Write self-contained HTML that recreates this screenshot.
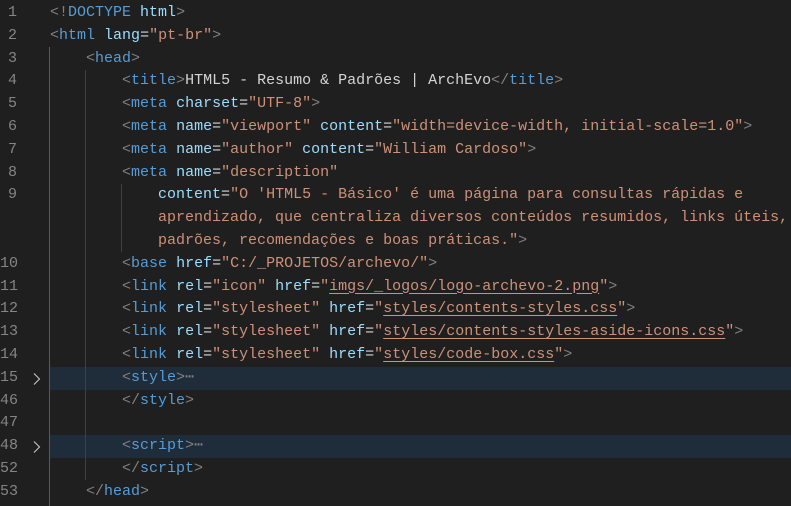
<!DOCTYPE html>
<html><head><meta charset="utf-8"><style>
html,body{margin:0;padding:0;background:#1f1f1f;width:791px;height:506px;overflow:hidden}
body{position:relative;font-family:"Liberation Mono",monospace;font-size:15px;color:#d4d4d4}
.r{position:absolute;left:0;width:791px;height:22.8px;line-height:22.8px;white-space:pre}
.n{position:absolute;left:0;width:17px;text-align:right;color:#858585}
.c{position:absolute;left:50px}
.hl{background:#1f2c3a}
.p{color:#808080}.t{color:#569cd6}.a{color:#9cdcfe}.s{color:#ce9178}.x{color:#d4d4d4}
.u{text-decoration:underline;text-underline-offset:3px}
.g{position:absolute;width:1px;background:#404040}
.f{position:absolute;left:32px;top:5px}
</style></head><body>
<div class="r" style="top:2px"><span class="n">1</span><span class="c"><span class="p">&lt;!</span><span class="t">DOCTYPE</span> <span class="a">html</span><span class="p">&gt;</span></span></div>
<div class="r" style="top:24.8px"><span class="n">2</span><span class="c"><span class="p">&lt;</span><span class="t">html</span> <span class="a">lang</span><span class="x">=</span><span class="s">"pt-br"</span><span class="p">&gt;</span></span></div>
<div class="r" style="top:47.6px"><span class="n">3</span><span class="c">    <span class="p">&lt;</span><span class="t">head</span><span class="p">&gt;</span></span></div>
<div class="r" style="top:70.4px"><span class="n">4</span><span class="c">        <span class="p">&lt;</span><span class="t">title</span><span class="p">&gt;</span>HTML5 - Resumo &amp; Padrões | ArchEvo<span class="p">&lt;/</span><span class="t">title</span><span class="p">&gt;</span></span></div>
<div class="r" style="top:93.2px"><span class="n">5</span><span class="c">        <span class="p">&lt;</span><span class="t">meta</span> <span class="a">charset</span><span class="x">=</span><span class="s">"UTF-8"</span><span class="p">&gt;</span></span></div>
<div class="r" style="top:116px"><span class="n">6</span><span class="c">        <span class="p">&lt;</span><span class="t">meta</span> <span class="a">name</span><span class="x">=</span><span class="s">"viewport"</span> <span class="a">content</span><span class="x">=</span><span class="s">"width=device-width, initial-scale=1.0"</span><span class="p">&gt;</span></span></div>
<div class="r" style="top:138.8px"><span class="n">7</span><span class="c">        <span class="p">&lt;</span><span class="t">meta</span> <span class="a">name</span><span class="x">=</span><span class="s">"author"</span> <span class="a">content</span><span class="x">=</span><span class="s">"William Cardoso"</span><span class="p">&gt;</span></span></div>
<div class="r" style="top:161.6px"><span class="n">8</span><span class="c">        <span class="p">&lt;</span><span class="t">meta</span> <span class="a">name</span><span class="x">=</span><span class="s">"description"</span></span></div>
<div class="r" style="top:184.4px"><span class="n">9</span><span class="c">            <span class="a">content</span><span class="x">=</span><span class="s">"O 'HTML5 - Básico' é uma página para consultas rápidas e</span></span></div>
<div class="r" style="top:207.2px"><span class="c">            <span class="s">aprendizado, que centraliza diversos conteúdos resumidos, links úteis,</span></span></div>
<div class="r" style="top:230px"><span class="c">            <span class="s">padrões, recomendações e boas práticas."</span><span class="p">&gt;</span></span></div>
<div class="r" style="top:252.8px"><span class="n">10</span><span class="c">        <span class="p">&lt;</span><span class="t">base</span> <span class="a">href</span><span class="x">=</span><span class="s">"C:/_PROJETOS/archevo/"</span><span class="p">&gt;</span></span></div>
<div class="r" style="top:275.6px"><span class="n">11</span><span class="c">        <span class="p">&lt;</span><span class="t">link</span> <span class="a">rel</span><span class="x">=</span><span class="s">"icon"</span> <span class="a">href</span><span class="x">=</span><span class="s">"<span class="u">imgs/_logos/logo-archevo-2.png</span>"</span><span class="p">&gt;</span></span></div>
<div class="r" style="top:298.4px"><span class="n">12</span><span class="c">        <span class="p">&lt;</span><span class="t">link</span> <span class="a">rel</span><span class="x">=</span><span class="s">"stylesheet"</span> <span class="a">href</span><span class="x">=</span><span class="s">"<span class="u">styles/contents-styles.css</span>"</span><span class="p">&gt;</span></span></div>
<div class="r" style="top:321.2px"><span class="n">13</span><span class="c">        <span class="p">&lt;</span><span class="t">link</span> <span class="a">rel</span><span class="x">=</span><span class="s">"stylesheet"</span> <span class="a">href</span><span class="x">=</span><span class="s">"<span class="u">styles/contents-styles-aside-icons.css</span>"</span><span class="p">&gt;</span></span></div>
<div class="r" style="top:344px"><span class="n">14</span><span class="c">        <span class="p">&lt;</span><span class="t">link</span> <span class="a">rel</span><span class="x">=</span><span class="s">"stylesheet"</span> <span class="a">href</span><span class="x">=</span><span class="s">"<span class="u">styles/code-box.css</span>"</span><span class="p">&gt;</span></span></div>
<div class="r" style="top:366.8px"><div class="hl" style="position:absolute;left:50px;right:0;top:0;bottom:0"></div><span class="n">15</span><svg class="f" width="10" height="14"><path d="M2 1.5 L7.5 7 L2 12.5" fill="none" stroke="#c5c5c5" stroke-width="1.1"/></svg><span class="c">        <span class="p">&lt;</span><span class="t">style</span><span class="p">&gt;⋯</span></span></div>
<div class="r" style="top:389.6px"><span class="n">46</span><span class="c">        <span class="p">&lt;/</span><span class="t">style</span><span class="p">&gt;</span></span></div>
<div class="r" style="top:412.4px"><span class="n">47</span></div>
<div class="r" style="top:435.2px"><div class="hl" style="position:absolute;left:50px;right:0;top:0;bottom:0"></div><span class="n">48</span><svg class="f" width="10" height="14"><path d="M2 1.5 L7.5 7 L2 12.5" fill="none" stroke="#c5c5c5" stroke-width="1.1"/></svg><span class="c">        <span class="p">&lt;</span><span class="t">script</span><span class="p">&gt;⋯</span></span></div>
<div class="r" style="top:458px"><span class="n">52</span><span class="c">        <span class="p">&lt;/</span><span class="t">script</span><span class="p">&gt;</span></span></div>
<div class="r" style="top:480.8px"><span class="n">53</span><span class="c">    <span class="p">&lt;/</span><span class="t">head</span><span class="p">&gt;</span></span></div>
<div class="g" style="left:49px;top:47px;height:459px;background:#5a5a5a"></div>
<div class="g" style="left:85px;top:70px;height:410px"></div>
<div class="g" style="left:121px;top:184px;height:68px"></div>
</body></html>
